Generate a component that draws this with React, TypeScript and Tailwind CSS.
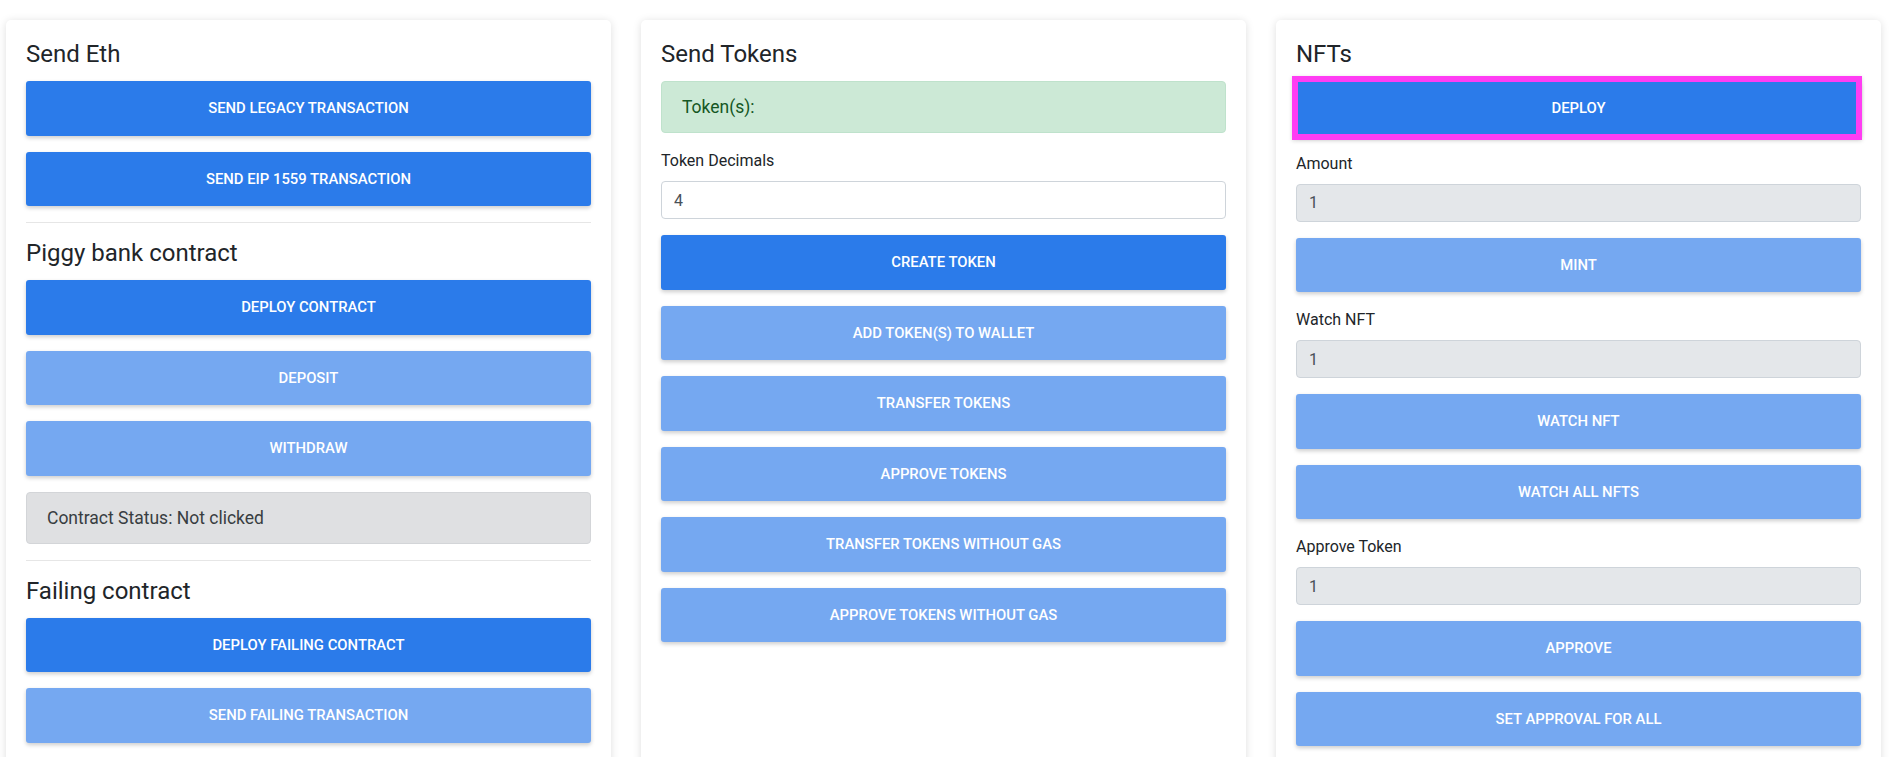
import React from "react";

type Btn = { label: string; disabled?: boolean; highlight?: boolean };

function ActionButton({ label, disabled, highlight }: Btn) {
  return (
    <button
      type="button"
      className={`relative mb-4 flex h-[54.5px] w-full items-center justify-center rounded-[3px] text-[14.85px] font-medium uppercase text-white shadow-[0_2px_4px_rgba(0,0,0,0.2)] ${
        disabled ? "bg-[#75a8f1]" : "bg-[#2b7bea]"
      }`}
    >
      {label}
      {highlight && (
        <span className="pointer-events-none absolute -top-[5px] -left-[4px] -right-[1px] -bottom-[4px] border-[6px] border-[#ff3df3] shadow-[0_1px_4px_rgba(0,0,0,0.15)]" />
      )}
    </button>
  );
}

function Heading({ children }: { children: React.ReactNode }) {
  return (
    <h4 className="mb-[12px] pt-[2px] text-[24px] leading-[29px] text-[#212529]">{children}</h4>
  );
}

function Divider() {
  return <hr className="mb-[14px] border-0 border-t border-[#e6e6e6]" />;
}

function Field({ label, value, readOnly }: { label: string; value: string; readOnly?: boolean }) {
  return (
    <>
      <label className="mb-2 block text-base leading-6 text-[#212529]">{label}</label>
      <input
        readOnly
        value={value}
        className={`mb-4 block h-[38px] w-full rounded-[4px] border border-[#ced4da] px-3 text-base text-[#495057] outline-none ${
          readOnly ? "bg-[#e4e7ea]" : "bg-white"
        }`}
      />
    </>
  );
}

function Card({ children }: { children: React.ReactNode }) {
  return (
    <div className="rounded-[5px] bg-white px-5 pt-[18px] pb-5 shadow-[0_1px_8px_rgba(0,0,0,0.13)]">
      {children}
    </div>
  );
}

export default function App() {
  return (
    <div className="min-h-screen bg-white font-[Roboto,Arial,sans-serif]">
      <div className="grid grid-cols-[repeat(3,605px)] gap-[30px] pt-5 pl-[6px]">
        {/* Send Eth column */}
        <Card>
          <Heading>Send Eth</Heading>
          <ActionButton label="Send Legacy Transaction" />
          <ActionButton label="Send EIP 1559 Transaction" />
          <Divider />
          <Heading>Piggy bank contract</Heading>
          <ActionButton label="Deploy Contract" />
          <ActionButton label="Deposit" disabled />
          <ActionButton label="Withdraw" disabled />
          <div className="mb-4 rounded-[4px] border border-[#d3d5d8] bg-[#dfe0e2] px-5 py-3 text-[17.5px] leading-[26px] text-[#383d41]">
            Contract Status: Not clicked
          </div>
          <Divider />
          <Heading>Failing contract</Heading>
          <ActionButton label="Deploy Failing Contract" />
          <ActionButton label="Send Failing Transaction" disabled />
        </Card>

        {/* Send Tokens column */}
        <Card>
          <Heading>Send Tokens</Heading>
          <div className="mb-4 rounded-[4px] border border-[#bfe2cc] bg-[#cce9d6] px-5 py-3 text-[17.5px] leading-[26px] text-[#155724]">
            Token(s):
          </div>
          <Field label="Token Decimals" value="4" />
          <ActionButton label="Create Token" />
          <ActionButton label="Add Token(s) to wallet" disabled />
          <ActionButton label="Transfer Tokens" disabled />
          <ActionButton label="Approve Tokens" disabled />
          <ActionButton label="Transfer Tokens Without Gas" disabled />
          <ActionButton label="Approve Tokens Without Gas" disabled />
        </Card>

        {/* NFTs column */}
        <Card>
          <Heading>NFTs</Heading>
          <ActionButton label="Deploy" highlight />
          <Field label="Amount" value="1" readOnly />
          <ActionButton label="Mint" disabled />
          <Field label="Watch NFT" value="1" readOnly />
          <ActionButton label="Watch NFT" disabled />
          <ActionButton label="Watch all NFTs" disabled />
          <Field label="Approve Token" value="1" readOnly />
          <ActionButton label="Approve" disabled />
          <ActionButton label="Set Approval For All" disabled />
        </Card>
      </div>
    </div>
  );
}
